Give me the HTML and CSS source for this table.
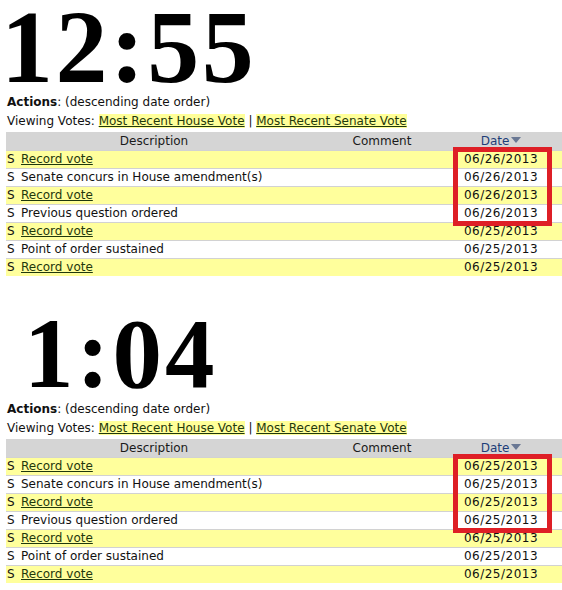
FILE: index.html
```html
<!DOCTYPE html>
<html>
<head>
<meta charset="utf-8">
<link rel="stylesheet" href="styles.css">
</head>
<body>
<section class="panel">
  <div class="clock">12:55</div>
  <div class="line"><b>Actions</b>: (descending date order)</div>
  <div class="line">Viewing Votes: <a class="hl" href="#">Most Recent House Vote</a> | <a class="hl" href="#">Most Recent Senate Vote</a></div>
  <div class="tablewrap">
    <table class="actions">
      <colgroup><col class="c-desc"><col class="c-comment"><col class="c-date"><col class="c-rest"></colgroup>
      <thead>
        <tr><th>Description</th><th>Comment</th><th class="date-h">Date<span class="arrow"></span></th><th></th></tr>
      </thead>
      <tbody>
        <tr class="y"><td><span class="ch">S</span><a href="#">Record vote</a></td><td></td><td class="d">06/26/2013</td><td></td></tr>
        <tr><td><span class="ch">S</span>Senate concurs in House amendment(s)</td><td></td><td class="d">06/26/2013</td><td></td></tr>
        <tr class="y"><td><span class="ch">S</span><a href="#">Record vote</a></td><td></td><td class="d">06/26/2013</td><td></td></tr>
        <tr><td><span class="ch">S</span>Previous question ordered</td><td></td><td class="d">06/26/2013</td><td></td></tr>
        <tr class="y"><td><span class="ch">S</span><a href="#">Record vote</a></td><td></td><td class="d">06/25/2013</td><td></td></tr>
        <tr><td><span class="ch">S</span>Point of order sustained</td><td></td><td class="d">06/25/2013</td><td></td></tr>
        <tr class="y"><td><span class="ch">S</span><a href="#">Record vote</a></td><td></td><td class="d">06/25/2013</td><td></td></tr>
      </tbody>
    </table>
    <div class="redbox"></div>
  </div>
</section>
<section class="panel">
  <div class="clock second">1:04</div>
  <div class="line"><b>Actions</b>: (descending date order)</div>
  <div class="line">Viewing Votes: <a class="hl" href="#">Most Recent House Vote</a> | <a class="hl" href="#">Most Recent Senate Vote</a></div>
  <div class="tablewrap">
    <table class="actions">
      <colgroup><col class="c-desc"><col class="c-comment"><col class="c-date"><col class="c-rest"></colgroup>
      <thead>
        <tr><th>Description</th><th>Comment</th><th class="date-h">Date<span class="arrow"></span></th><th></th></tr>
      </thead>
      <tbody>
        <tr class="y"><td><span class="ch">S</span><a href="#">Record vote</a></td><td></td><td class="d">06/25/2013</td><td></td></tr>
        <tr><td><span class="ch">S</span>Senate concurs in House amendment(s)</td><td></td><td class="d">06/25/2013</td><td></td></tr>
        <tr class="y"><td><span class="ch">S</span><a href="#">Record vote</a></td><td></td><td class="d">06/25/2013</td><td></td></tr>
        <tr><td><span class="ch">S</span>Previous question ordered</td><td></td><td class="d">06/25/2013</td><td></td></tr>
        <tr class="y"><td><span class="ch">S</span><a href="#">Record vote</a></td><td></td><td class="d">06/25/2013</td><td></td></tr>
        <tr><td><span class="ch">S</span>Point of order sustained</td><td></td><td class="d">06/25/2013</td><td></td></tr>
        <tr class="y"><td><span class="ch">S</span><a href="#">Record vote</a></td><td></td><td class="d">06/25/2013</td><td></td></tr>
      </tbody>
    </table>
    <div class="redbox"></div>
  </div>
</section>
</body>
</html>
```
FILE: styles.css
```css
html, body {
  margin: 0;
  padding: 0;
  background: #ffffff;
  overflow: hidden;
}
body {
  width: 562px;
  font-family: "DejaVu Sans", Verdana, sans-serif;
  font-size: 12px;
  color: #111111;
}
.panel {
  height: 307px;
}
.clock {
  font-family: "Liberation Serif", "Times New Roman", serif;
  font-weight: bold;
  font-size: 104px;
  line-height: 93px;
  height: 93px;
  padding-left: 1px;
  color: #000000;
  letter-spacing: 2.5px;
}
.clock.second {
  font-size: 99px;
  padding-left: 24px;
  letter-spacing: 3px;
}
.line {
  height: 19px;
  line-height: 19px;
  padding-left: 7px;
  white-space: nowrap;
}
.line b {
  font-weight: bold;
}
.line a.hl {
  color: #1f380c;
  background: #ffff99;
  text-decoration: underline;
}
.tablewrap {
  position: relative;
  margin-top: 1px;
  margin-left: 6px;
}
table.actions {
  border-collapse: collapse;
  width: 570px;
  table-layout: fixed;
}
.c-desc { width: 296px; }
.c-comment { width: 160px; }
.c-date { width: 78px; }
.c-rest { width: 36px; }
table.actions th {
  background: #d5d5d5;
  font-weight: normal;
  height: 18px;
  padding: 0;
  text-align: center;
  color: #1a1a1a;
  line-height: 18px;
}
table.actions th.date-h {
  color: #1e3d78;
}
.arrow {
  display: inline-block;
  width: 0;
  height: 0;
  margin-left: 2px;
  vertical-align: 2px;
  border-left: 5px solid transparent;
  border-right: 5px solid transparent;
  border-top: 6px solid #6a7894;
}
table.actions td {
  height: 17px;
  padding: 0;
  line-height: 17px;
  border-top: 1px solid #d2d2d2;
  white-space: nowrap;
}
table.actions tr.y td {
  background: #ffff9c;
}
table.actions td.d {
  text-align: center;
  letter-spacing: 0.5px;
}
.ch {
  display: inline-block;
  width: 14px;
  padding-left: 1px;
}
table.actions td a {
  color: #1f380c;
  text-decoration: underline;
}
.redbox {
  position: absolute;
  left: 447px;
  top: 15px;
  width: 89px;
  height: 69px;
  border: 5px solid #de1f26;
}
```
